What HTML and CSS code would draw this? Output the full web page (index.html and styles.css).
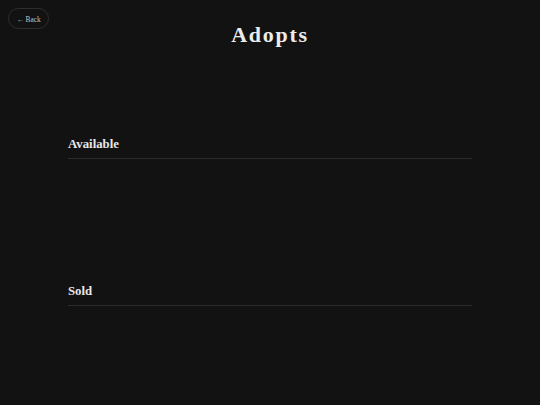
FILE: index.html
```html
<!DOCTYPE html>
<html>
<head>
<meta charset="utf-8">
<link rel="stylesheet" href="styles.css">
</head>
<body>
<a class="back" href="#">← Back</a>
<header class="header"><h1 class="title">Adopts</h1></header>
<main class="content">
  <section class="section">
    <h2 class="section-title">Available</h2>
    <div class="grid"></div>
  </section>
  <section class="section">
    <h2 class="section-title">Sold</h2>
    <div class="grid"></div>
  </section>
</main>
</body>
</html>
```
FILE: styles.css
```css
html, body {
  margin: 0;
  padding: 0;
  background: #121212;
  color: #e6e6e6;
  font-family: "Liberation Serif", "Times New Roman", serif;
}
body {
  width: 540px;
  height: 405px;
  overflow: hidden;
  position: relative;
}
.back {
  position: absolute;
  left: 8px;
  top: 8px;
  width: 41px;
  height: 21px;
  box-sizing: border-box;
  padding-top: 1px;
  border: 1px solid #2e2e2e;
  border-radius: 11px;
  display: flex;
  align-items: center;
  justify-content: center;
  font-size: 7.3px;
  color: #c4c4c4;
  text-decoration: none;
}
.header {
  padding-top: 21px;
  text-align: center;
}
.title {
  margin: 0;
  font-size: 22px;
  font-weight: bold;
  letter-spacing: 1.7px;
  line-height: 28px;
  color: #ececec;
}
.content {
  width: 404px;
  margin: 0 auto;
  padding-top: 88px;
  display: flex;
  flex-direction: column;
  gap: 125px;
}
.section-title {
  margin: 0;
  font-size: 12.8px;
  font-weight: bold;
  line-height: 15px;
  padding-bottom: 6px;
  border-bottom: 1px solid #2a2a2a;
  color: #e8e8e8;
}
.grid {
  height: 0;
}
```
